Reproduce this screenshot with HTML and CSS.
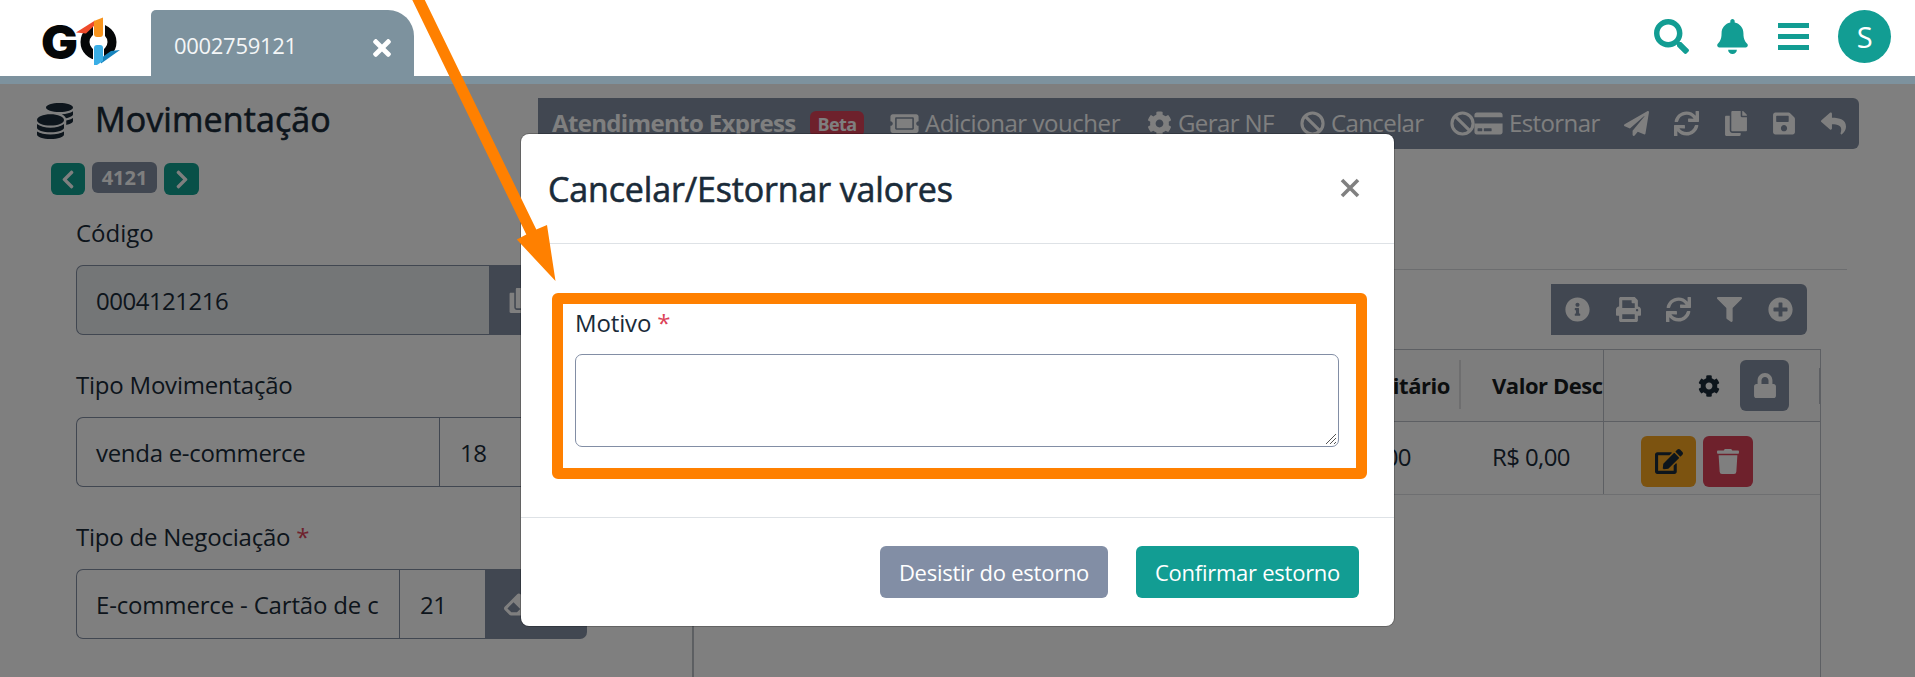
FILE: index.html
```html
<!DOCTYPE html>
<html lang="pt-BR">
<head>
<meta charset="utf-8">
<title>Movimentação</title>
<link rel="stylesheet" href="styles.css">
</head>
<body>
<svg class="sprite" aria-hidden="true">
  <symbol id="times" viewBox="0 0 352 512"><path d="M242.72 256l100.07-100.07c12.28-12.28 12.28-32.19 0-44.48l-22.24-22.24c-12.28-12.28-32.19-12.28-44.48 0L176 189.28 75.93 89.21c-12.28-12.28-32.19-12.28-44.48 0L9.21 111.45c-12.28 12.28-12.28 32.19 0 44.48L109.28 256 9.21 356.07c-12.28 12.28-12.28 32.19 0 44.48l22.24 22.24c12.28 12.28 32.2 12.28 44.48 0L176 322.72l100.07 100.07c12.28 12.28 32.2 12.28 44.48 0l22.24-22.24c12.28-12.28 12.28-32.19 0-44.48L242.72 256z"/></symbol>
  <symbol id="search" viewBox="0 0 512 512"><path d="M505 442.7L405.3 343c-4.5-4.5-10.6-7-17-7H372c27.6-35.3 44-79.7 44-128C416 93.1 322.9 0 208 0S0 93.1 0 208s93.1 208 208 208c48.3 0 92.7-16.4 128-44v16.3c0 6.4 2.5 12.5 7 17l99.7 99.7c9.4 9.4 24.6 9.4 33.9 0l28.3-28.3c9.4-9.4 9.4-24.6.1-34zM208 336c-70.7 0-128-57.2-128-128 0-70.7 57.2-128 128-128 70.7 0 128 57.2 128 128 0 70.7-57.2 128-128 128z"/></symbol>
  <symbol id="bell" viewBox="0 0 448 512"><path d="M224 512c35.32 0 63.97-28.65 63.97-64H160.03c0 35.35 28.65 64 63.97 64zm215.39-149.71c-19.32-20.76-55.47-51.99-55.47-154.29 0-77.7-54.48-139.9-127.94-155.16V32c0-17.67-14.32-32-31.98-32s-31.98 14.33-31.98 32v20.84C118.56 68.1 64.08 130.3 64.08 208c0 102.3-36.15 133.53-55.47 154.29-6 6.45-8.66 14.16-8.61 21.71.11 16.4 12.98 32 32.1 32h383.8c19.12 0 32-15.6 32.1-32 .05-7.55-2.61-15.27-8.61-21.71z"/></symbol>
  <symbol id="bars" viewBox="0 0 31 27"><path d="M0 0h31v5H0zM0 11h31v5H0zM0 22h31v5H0z"/></symbol>
  <symbol id="cog" viewBox="0 0 512 512"><path d="M487.4 315.7l-42.6-24.6c4.3-23.2 4.3-47 0-70.2l42.6-24.6c4.9-2.8 7.1-8.6 5.5-14-11.1-35.6-30-67.8-54.7-94.6-3.8-4.1-10-5.1-14.8-2.3L380.8 110c-17.9-15.4-38.5-27.3-60.8-35.1V25.8c0-5.6-3.9-10.5-9.4-11.7-36.7-8.2-74.3-7.8-109.2 0-5.5 1.2-9.4 6.1-9.4 11.7V75c-22.2 7.9-42.8 19.8-60.8 35.1L88.7 85.5c-4.9-2.8-11-1.9-14.8 2.3-24.7 26.7-43.6 58.9-54.7 94.6-1.7 5.4.6 11.2 5.5 14L67.3 221c-4.3 23.2-4.3 47 0 70.2l-42.6 24.6c-4.9 2.8-7.1 8.6-5.5 14 11.1 35.6 30 67.8 54.7 94.6 3.8 4.1 10 5.1 14.8 2.3l42.6-24.6c17.9 15.4 38.5 27.3 60.8 35.1v49.2c0 5.6 3.9 10.5 9.4 11.7 36.7 8.2 74.3 7.8 109.2 0 5.5-1.2 9.4-6.1 9.4-11.7v-49.2c22.2-7.9 42.8-19.8 60.8-35.1l42.6 24.6c4.9 2.8 11 1.9 14.8-2.3 24.7-26.7 43.6-58.9 54.7-94.6 1.5-5.5-.7-11.3-5.6-14.1zM256 336c-44.1 0-80-35.9-80-80s35.9-80 80-80 80 35.9 80 80-35.9 80-80 80z"/></symbol>
  <symbol id="ban" viewBox="0 0 512 512"><g fill="none" stroke="currentColor" stroke-width="64"><circle cx="256" cy="256" r="216"/><path d="M108 108l296 296"/></g></symbol>
  <symbol id="plane" viewBox="0 0 512 512"><path d="M476 3.2L12.5 270.6c-18.1 10.4-15.8 35.6 2.2 43.2L121 358.4l287.3-253.2c5.5-4.9 13.3 2.6 8.6 8.3L176 407v80.5c0 23.6 28.5 32.9 42.5 15.8L282 426l124.6 52.2c14.2 6 30.4-2.9 33-18.2l72-432C515 7.8 493.3-6.8 476 3.2z"/></symbol>
  <symbol id="copy" viewBox="0 0 448 512"><path d="M320 448v40c0 13.255-10.745 24-24 24H24c-13.255 0-24-10.745-24-24V120c0-13.255 10.745-24 24-24h72v296c0 30.879 25.121 56 56 56h168zm0-344V0H152c-13.255 0-24 10.745-24 24v368c0 13.255 10.745 24 24 24h272c13.255 0 24-10.745 24-24V128H344c-13.2 0-24-10.8-24-24zm120.971-31.029L375.029 7.029A24 24 0 0 0 358.059 0H352v96h96v-6.059a24 24 0 0 0-7.029-16.97z"/></symbol>
  <symbol id="save" viewBox="0 0 448 512"><path d="M433.941 129.941l-83.882-83.882A48 48 0 0 0 316.118 32H48C21.49 32 0 53.49 0 80v352c0 26.51 21.49 48 48 48h352c26.51 0 48-21.49 48-48V163.882a48 48 0 0 0-14.059-33.941zM224 416c-35.346 0-64-28.654-64-64 0-35.346 28.654-64 64-64s64 28.654 64 64c0 35.346-28.654 64-64 64zm96-304.52V212c0 6.627-5.373 12-12 12H76c-6.627 0-12-5.373-12-12V108c0-6.627 5.373-12 12-12h228.52c3.183 0 6.235 1.264 8.485 3.515l3.48 3.48A11.996 11.996 0 0 1 320 111.48z"/></symbol>
  <symbol id="reply" viewBox="0 0 512 512"><path d="M8.309 189.836L184.313 37.851C199.719 24.546 224 35.347 224 56.015v80.053c160.629 1.839 288 34.032 288 186.258 0 61.441-39.581 122.309-83.333 154.132-13.653 9.931-33.111-2.533-28.077-18.631 45.344-145.012-21.507-183.51-176.59-185.742V360c0 20.7-24.3 31.453-39.687 18.164l-176.004-152c-11.071-9.562-11.086-26.753 0-36.328z"/></symbol>
  <symbol id="sync" viewBox="0 0 512 512"><path d="M440.65 12.57l4 82.77A247.16 247.16 0 0 0 255.83 8C134.73 8 33.91 94.92 12.29 209.82A12 12 0 0 0 24.09 224h49.05a12 12 0 0 0 11.67-9.26 175.91 175.91 0 0 1 317-56.94l-101.46-4.86a12 12 0 0 0-12.57 12v47.41a12 12 0 0 0 12 12H500a12 12 0 0 0 12-12V12a12 12 0 0 0-12-12h-47.37a12 12 0 0 0-11.98 12.57zM255.83 432a175.61 175.61 0 0 1-146-77.8l101.8 4.87a12 12 0 0 0 12.57-12v-47.4a12 12 0 0 0-12-12H12a12 12 0 0 0-12 12V500a12 12 0 0 0 12 12h47.35a12 12 0 0 0 12-12.6l-4.15-82.57A247.17 247.17 0 0 0 255.83 504c121.11 0 221.93-86.92 243.55-201.82a12 12 0 0 0-11.8-14.18h-49.05a12 12 0 0 0-11.67 9.26A175.86 175.86 0 0 1 255.83 432z"/></symbol>
  <symbol id="info" viewBox="0 0 512 512"><path d="M256 8C119.043 8 8 119.083 8 256c0 136.997 111.043 248 248 248s248-111.003 248-248C504 119.083 392.957 8 256 8zm0 110c23.196 0 42 18.804 42 42s-18.804 42-42 42-42-18.804-42-42 18.804-42 42-42zm56 254c0 6.627-5.373 12-12 12h-88c-6.627 0-12-5.373-12-12v-24c0-6.627 5.373-12 12-12h12v-64h-12c-6.627 0-12-5.373-12-12v-24c0-6.627 5.373-12 12-12h64c6.627 0 12 5.373 12 12v100h12c6.627 0 12 5.373 12 12v24z"/></symbol>
  <symbol id="print" viewBox="0 0 512 512"><path d="M448 192V77.25c0-8.49-3.37-16.62-9.37-22.63L393.37 9.37c-6-6-14.14-9.37-22.63-9.37H96C78.33 0 64 14.33 64 32v160c-35.35 0-64 28.65-64 64v112c0 8.84 7.16 16 16 16h48v96c0 17.67 14.33 32 32 32h320c17.67 0 32-14.33 32-32v-96h48c8.84 0 16-7.16 16-16V256c0-35.35-28.65-64-64-64zm-64 256H128v-96h256v96zm0-224H128V64h192v48c0 8.84 7.16 16 16 16h48v96zm48 72c-13.25 0-24-10.75-24-24 0-13.26 10.75-24 24-24s24 10.74 24 24c0 13.25-10.75 24-24 24z"/></symbol>
  <symbol id="filter" viewBox="0 0 512 512"><path d="M487.976 0H24.028C2.71 0-8.047 25.866 7.058 40.971L192 225.941V432c0 7.831 3.821 15.17 10.237 19.662l80 55.98C298.02 518.69 320 507.493 320 487.98V225.941l184.947-184.97C520.021 25.896 509.338 0 487.976 0z"/></symbol>
  <symbol id="plus" viewBox="0 0 512 512"><path d="M256 8C119 8 8 119 8 256s111 248 248 248 248-111 248-248S393 8 256 8zm144 276c0 6.6-5.4 12-12 12h-92v92c0 6.6-5.4 12-12 12h-56c-6.6 0-12-5.4-12-12v-92h-92c-6.6 0-12-5.4-12-12v-56c0-6.6 5.4-12 12-12h92v-92c0-6.6 5.4-12 12-12h56c6.6 0 12 5.4 12 12v92h92c6.6 0 12 5.4 12 12v56z"/></symbol>
  <symbol id="lock" viewBox="0 0 448 512"><path d="M400 224h-24v-72C376 68.2 307.8 0 224 0S72 68.2 72 152v72H48c-26.5 0-48 21.5-48 48v192c0 26.5 21.5 48 48 48h352c26.5 0 48-21.5 48-48V272c0-26.5-21.5-48-48-48zm-104 0H152v-72c0-39.7 32.3-72 72-72s72 32.3 72 72v72z"/></symbol>
  <symbol id="edit" viewBox="0 0 576 512"><path d="M402.6 83.2l90.2 90.2c3.8 3.8 3.8 10 0 13.8L274.4 405.6l-92.8 10.3c-12.4 1.4-22.9-9.1-21.5-21.5l10.3-92.8L388.8 83.2c3.8-3.8 10-3.8 13.8 0zm162-22.9l-48.8-48.8c-15.2-15.2-39.9-15.2-55.2 0l-35.4 35.4c-3.8 3.8-3.8 10 0 13.8l90.2 90.2c3.8 3.8 10 3.8 13.8 0l35.4-35.4c15.2-15.3 15.2-40 0-55.2zM384 346.2V448H64V128h229.8c3.2 0 6.2-1.3 8.5-3.5l40-40c7.6-7.6 2.2-20.5-8.5-20.5H48C21.5 64 0 85.5 0 112v352c0 26.5 21.5 48 48 48h352c26.5 0 48-21.5 48-48V306.2c0-10.7-12.9-16-20.5-8.5l-40 40c-2.2 2.3-3.5 5.3-3.5 8.5z"/></symbol>
  <symbol id="trash" viewBox="0 0 448 512"><path d="M432 32H312l-9.4-18.7A24 24 0 0 0 281.1 0H166.8a23.72 23.72 0 0 0-21.4 13.3L136 32H16A16 16 0 0 0 0 48v32a16 16 0 0 0 16 16h416a16 16 0 0 0 16-16V48a16 16 0 0 0-16-16zM32 128l21.2 339a48 48 0 0 0 47.9 45h245.8a48 48 0 0 0 47.9-45L416 128z"/></symbol>
  <symbol id="ticket" viewBox="0 0 576 512"><path d="M128 160h320v192H128V160zm400 96c0 26.51 21.49 48 48 48v96c0 26.51-21.49 48-48 48H48c-26.51 0-48-21.49-48-48v-96c26.51 0 48-21.49 48-48s-21.49-48-48-48v-96c0-26.51 21.49-48 48-48h480c26.51 0 48 21.49 48 48v96c-26.51 0-48 21.49-48 48zm-48-104c0-13.255-10.745-24-24-24H120c-13.255 0-24 10.745-24 24v208c0 13.255 10.745 24 24 24h336c13.255 0 24-10.745 24-24V152z"/></symbol>
  <symbol id="card" viewBox="0 0 576 512"><path d="M0 432c0 26.5 21.5 48 48 48h480c26.5 0 48-21.5 48-48V256H0v176zm192-68c0-6.6 5.4-12 12-12h136c6.6 0 12 5.4 12 12v40c0 6.6-5.4 12-12 12H204c-6.6 0-12-5.4-12-12v-40zm-128 0c0-6.6 5.4-12 12-12h72c6.6 0 12 5.4 12 12v40c0 6.6-5.4 12-12 12H76c-6.6 0-12-5.4-12-12v-40zM576 80v48H0V80c0-26.5 21.5-48 48-48h480c26.5 0 48 21.5 48 48z"/></symbol>
  <symbol id="coins" viewBox="0 0 512 512"><path d="M0 405.3V448c0 35.3 86 64 192 64s192-28.7 192-64v-42.7C342.7 434.4 267.2 448 192 448S41.3 434.4 0 405.3zM320 128c106 0 192-28.7 192-64S426 0 320 0 128 28.7 128 64s86 64 192 64zM0 300.4V352c0 35.3 86 64 192 64s192-28.7 192-64v-51.6c-41.3 34-116.9 51.6-192 51.6S41.3 334.4 0 300.4zm416 11c57.3-11.1 96-31.7 96-55.4v-42.7c-23.2 16.4-57.3 27.6-96 34.5v63.6zM192 160C86 160 0 195.8 0 240s86 80 192 80 192-35.8 192-80-86-80-192-80zm219.3 56.3c60-10.8 100.7-32 100.7-56.3v-42.7c-35.5 25.1-96.5 38.6-160.7 41.8 29.5 14.3 51.2 33.5 60 57.2z"/></symbol>
  <symbol id="eraser" viewBox="0 0 512 512"><path d="M497.941 273.941c18.745-18.745 18.745-49.137 0-67.882l-160-160c-18.745-18.745-49.136-18.746-67.883 0l-256 256c-18.745 18.745-18.745 49.137 0 67.882l96 96A48.004 48.004 0 0 0 144 480h356c6.627 0 12-5.373 12-12v-40c0-6.627-5.373-12-12-12H355.883l142.058-142.059zm-302.627-62.627l137.373 137.373L265.373 416H150.628l-80-80 124.686-124.686z"/></symbol>
  <symbol id="chevron" viewBox="0 0 320 512"><path d="M34.52 239.03L228.87 44.69c9.37-9.37 24.57-9.37 33.94 0l22.67 22.67c9.36 9.36 9.37 24.52.04 33.9L131.49 256l154.02 154.75c9.34 9.38 9.32 24.54-.04 33.9l-22.67 22.67c-9.37 9.37-24.57 9.37-33.94 0L34.52 272.97c-9.37-9.37-9.37-24.57 0-33.94z"/></symbol>
</svg>

<header class="topbar">
  <svg class="logo" viewBox="0 0 90 56" role="img" aria-label="GO">
    <text class="logo-g" x="5" y="46.500" textLength="37" lengthAdjust="spacingAndGlyphs">G</text>
    <circle cx="62.500" cy="30" r="13.500" fill="none" stroke="#050708" stroke-width="9"/>
    <path d="M57 10h12v17H57zM57 33h11v21H57z" fill="#fff"/>
    <path d="M40 20.500L59 8.500V13l-9 8.500z" fill="#ef4b2b"/>
    <path d="M58 9l9-3.500v16.500q0 3-3 3h-3q-3 0-3-3z" fill="#f7941e"/>
    <path d="M84 38l-19 13.500V46l10-7z" fill="#1683bd"/>
    <path d="M58 36q0-3 3-3h3q3 0 3 3v13l-6 4h-3z" fill="#3aaee6"/>
  </svg>
  <div class="tab"><span>0002759121</span><svg class="tab-close"><use href="#times"/></svg></div>
  <nav class="top-actions">
    <svg class="ic-search"><use href="#search"/></svg>
    <svg class="ic-bell"><use href="#bell"/></svg>
    <svg class="ic-bars"><use href="#bars"/></svg>
    <div class="avatar">S</div>
  </nav>
</header>

<main class="page">
  <section class="page-head">
    <div class="heading">
      <h1><svg class="ic-coins"><use href="#coins"/></svg><span>Movimentação</span></h1>
      <div class="pager">
        <button class="step"><svg><use href="#chevron"/></svg></button>
        <span class="step-no">4121</span>
        <button class="step next"><svg><use href="#chevron"/></svg></button>
      </div>
    </div>
    <div class="toolbar">
      <div class="express"><b>Atendimento Express</b><span class="beta">Beta</span></div>
      <div><svg class="wide"><use href="#ticket"/></svg><span class="voucher">Adicionar voucher</span></div>
      <div><svg><use href="#cog"/></svg><span>Gerar NF</span></div>
      <div><svg><use href="#ban"/></svg><span>Cancelar</span></div>
      <div class="refund"><svg><use href="#ban"/></svg><svg class="wide"><use href="#card"/></svg><span>Estornar</span></div>
      <div><svg><use href="#plane"/></svg></div>
      <div><svg><use href="#sync"/></svg></div>
      <div><svg class="slim"><use href="#copy"/></svg></div>
      <div><svg class="slim"><use href="#save"/></svg></div>
      <div><svg><use href="#reply"/></svg></div>
    </div>
  </section>

  <div class="columns">
    <aside class="form">
      <label class="short">Código</label>
      <div class="group"><div class="field ro digits">0004121216</div><div class="addon"><svg class="slim"><use href="#copy"/></svg></div></div>
      <label>Tipo Movimentação</label>
      <div class="group"><div class="field main2">venda e-commerce</div><div class="field code digits">18</div></div>
      <label>Tipo de Negociação <i>*</i></label>
      <div class="group"><div class="field main3">E-commerce - Cartão de c</div><div class="field num digits">21</div><div class="addon last"><svg><use href="#eraser"/></svg></div></div>
    </aside>
    <section class="items">
      <div class="rule"></div>
      <div class="mini-bar">
        <svg><use href="#info"/></svg><svg><use href="#print"/></svg><svg><use href="#sync"/></svg><svg><use href="#filter"/></svg><svg><use href="#plus"/></svg>
      </div>
      <div class="table">
        <div class="row head">
          <div class="cell unit">Valor Unitário</div>
          <div class="cell disc">Valor Desc</div>
          <div class="cell acts"><svg class="gear"><use href="#cog"/></svg><div class="sq lock"><svg class="slim"><use href="#lock"/></svg></div><div class="tick"></div></div>
        </div>
        <div class="row">
          <div class="cell unit">R$ 0,00</div>
          <div class="cell disc">R$ 0,00</div>
          <div class="cell acts"><div class="sq edit"><svg class="wide"><use href="#edit"/></svg></div><div class="sq trash"><svg class="slim"><use href="#trash"/></svg></div></div>
        </div>
      </div>
    </section>
  </div>
</main>

<div class="backdrop"></div>
<div class="modal" role="dialog">
  <div class="modal-head"><h2>Cancelar/Estornar valores</h2><svg class="modal-close" viewBox="0 0 20 20"><path d="M2 2l16 16M18 2L2 18"/></svg></div>
  <div class="modal-body">
    <div class="highlight">
      <label>Motivo <i>*</i></label>
      <div class="area"><svg viewBox="0 0 12 12"><path d="M1 11L11 1M5 11l6-6M9 11l2-2"/></svg></div>
    </div>
  </div>
  <div class="modal-foot"><button class="btn gray">Desistir do estorno</button><button class="btn teal">Confirmar estorno</button></div>
</div>
<svg class="arrow" viewBox="0 0 600 300"><path d="M412.300 0H424.800L536.300 229.600L547 225L555.500 281L516.800 239.600L526.300 234.500z"/></svg>
</body>
</html>
```
FILE: styles.css
```css
* { box-sizing: border-box; }
html, body { margin: 0; height: 677px; overflow: hidden; }
body {
  font: 400 24px/36px "Open Sans", "Noto Sans", sans-serif;
  letter-spacing: -0.6px;
  color: #1a2b39;
  background: #fff;
}
svg { display: block; flex: none; fill: currentColor; }
i { font-style: normal; color: #dc4259; }
button { border: 0; padding: 0; font: inherit; letter-spacing: inherit; color: #fff; }
.sprite { position: absolute; width: 0; height: 0; }

/* top bar */
.topbar {
  position: relative; z-index: 2;
  display: flex; align-items: flex-end;
  height: 84px; border-bottom: 8px solid #7d929e; background: #fff;
}
.logo { width: 90px; height: 56px; margin: 0 25px 8px 36px; }
.logo-g { font: 900 47px "Inter", sans-serif; letter-spacing: 0; fill: #050708; }
.tab {
  display: flex; justify-content: space-between; align-items: center;
  width: 263px; height: 66px; padding: 0 23px 0 23px;
  border-radius: 5px 26px 0 0; background: #7d929e; color: #f4f6f7;
}
.tab span { font-size: 22px; letter-spacing: -0.3px; line-height: 36px; padding-top: 4px; }
.tab-close { width: 18px; height: 26px; margin-top: 10px; color: #fff; }
.top-actions { display: flex; align-items: center; height: 76px; margin-left: auto; padding: 0 24px 3px 0; color: #129d93; }
.ic-search { width: 35px; height: 35px; margin-right: 28px; }
.ic-bell { width: 31px; height: 35px; margin-right: 30px; }
.ic-bars { width: 31px; height: 27px; margin-right: 29px; }
.avatar { width: 53px; height: 53px; border-radius: 50%; background: #129d93; color: #fff; font-size: 29px; line-height: 54px; text-align: center; }

/* page head */
.page-head { display: flex; height: 130px; padding-top: 14px; }
.heading { width: 538px; padding-left: 37px; }
h1 { display: flex; align-items: center; gap: 22px; margin: 0; height: 46px; font-size: 34px; font-weight: 500; letter-spacing: 0.1px; line-height: 46px; -webkit-text-stroke: 0.6px; }
.ic-coins { width: 36px; height: 36px; }
h1 span { padding-bottom: 4px; }
.pager { display: flex; gap: 7px; padding: 18px 0 0 14px; }
.step { display: grid; place-items: center; width: 34px; height: 32px; margin-top: 1px; border-radius: 6px; background: #10a090; }
.step svg { width: 14px; height: 21px; }
.next { width: 35px; }
.next svg { transform: scaleX(-1); }
.step-no { width: 65px; height: 31px; border-radius: 6px; background: #828ea2; color: #fff; font-weight: 700; font-size: 20px; letter-spacing: 0; line-height: 32px; text-align: center; }
.toolbar {
  display: grid; grid-template-columns: 338px 257px 153px 150px 174px 50px 51px 48px 48px 38px;
  width: 1321px; height: 51px; padding-left: 14px;
  border-radius: 0 6px 6px 0; background: #828ea2; color: #fff;
}
.toolbar > div { display: flex; align-items: center; gap: 6px; white-space: nowrap; }
.toolbar svg { width: 25px; height: 25px; }
.toolbar svg.wide { width: 29px; }
svg.slim, .toolbar svg.slim { width: 22px; height: 25px; }
.toolbar span, .toolbar b { padding-bottom: 1px; }
.toolbar .voucher { letter-spacing: -0.45px; }
.refund svg + svg { margin-left: -7px; }
.toolbar .express { gap: 8px; }
.express b { letter-spacing: -0.65px; width: 250px; }
.toolbar .beta { width: 54px; height: 26px; padding: 0; border-radius: 6px; background: #dc4259; font-size: 18px; font-weight: 700; line-height: 27px; text-align: center; }

/* columns */
.columns { display: flex; height: 463px; }
.form { width: 692px; padding: 0 105px 0 76px; flex: none; }
.form label { display: block; height: 36px; margin-top: 1px; line-height: 36px; letter-spacing: -0.22px; }
.form .short { letter-spacing: 0; }
.group { display: flex; height: 70px; margin: 14px 0 32px; }
.field { height: 70px; padding: 0 19px; border: 1px solid #828ea2; border-right: 0; line-height: 70px; letter-spacing: -0.3px; white-space: nowrap; overflow: hidden; }
.field:first-child { border-radius: 7px 0 0 7px; }
.field.digits { letter-spacing: -0.5px; }
.ro { width: 413px; background: #e9ecef; }
.main2 { width: 363px; }
.code { width: 148px; padding-left: 20px; }
.main3 { width: 323px; letter-spacing: -0.17px; }
.num { width: 86px; padding-left: 20px; }
.addon { display: flex; align-items: center; width: 98px; padding-left: 19px; background: #828ea2; color: #fff; }
.addon.last { width: 102px; border-radius: 0 7px 7px 0; }
.addon svg { width: 25px; height: 25px; }

.items { width: 1155px; height: 463px; border-left: 1px solid #b9bec3; }
.rule { height: 1px; margin-top: 55px; background: #d9dbde; }
.mini-bar {
  display: flex; align-items: center; gap: 25.700px;
  width: 256px; height: 51px; margin: 14px 0 14px 858px; padding-left: 14px;
  border-radius: 0 6px 6px 0; background: #828ea2; color: #fff;
}
.mini-bar svg { width: 25px; height: 25px; }
.table { width: 1128px; height: 328px; border: 1px solid #babfc7; border-bottom: 0; }
.row { display: flex; height: 73px; border-bottom: 1px solid #dddfe2; }
.row.head { height: 72px; border-color: #babfc7; background: #fafafa; font-size: 22px; font-weight: 700; color: #181d1f; letter-spacing: -0.45px; }
.cell { display: flex; align-items: center; white-space: nowrap; overflow: hidden; padding-bottom: 2px; }
.unit { width: 767px; justify-content: flex-end; padding-right: 50px; }
.head .unit { padding-right: 0; }
.head .unit::after { content: ""; width: 2px; height: 49px; margin-left: 9px; background: #dddddf; }
.disc { width: 143px; padding-left: 31px; border-right: 1px solid #babfc7; }
.acts { flex: 1; padding: 0 0 0 37px; gap: 7px; }
.head .acts { padding-left: 94px; gap: 0; }
.gear { width: 22px; height: 22px; margin-right: 20px; color: #1a2b39; }
.sq { display: grid; place-items: center; height: 51px; border-radius: 6px; color: #fff; }
.lock { width: 49px; background: #828ea2; }
.edit { width: 55px; background: #f8a620; color: #1a2b39; }
.edit svg { width: 28px; height: 25px; }
.trash { width: 50px; background: #dc4259; }
.row:not(.head) .sq { margin-top: 7px; }
.tick { width: 1px; height: 36px; margin-left: 30px; background: #babfc7; }

/* dialog */
.backdrop { position: absolute; inset: 84px 0 0; background: rgba(0, 0, 0, .5); }
.modal { position: absolute; z-index: 3; left: 521px; top: 134px; width: 873px; height: 492px; border-radius: 8px; background: #fff; box-shadow: 0 0 0 1px rgba(0, 0, 0, .22); }
.modal-head { display: flex; justify-content: space-between; height: 110px; padding: 32px 34px 0 27px; border-bottom: 1px solid #dee2e6; }
h2 { margin: 0; font-size: 34px; font-weight: 500; letter-spacing: -0.15px; line-height: 46px; -webkit-text-stroke: 0.6px; }
.modal-close { width: 20px; height: 20px; margin-top: 12px; fill: none; stroke: #808080; stroke-width: 3.600; }
.modal-body { height: 273px; padding: 49px 27px 0 31px; }
.highlight { height: 186px; padding: 11px 17px 0 12px; border: 11px solid #ff8000; border-radius: 6px; background: #fff; background-clip: padding-box; }
.highlight label { display: block; line-height: 36px; margin-top: -10px; letter-spacing: -0.15px; }
.area { display: flex; justify-content: flex-end; align-items: flex-end; height: 93px; margin-top: 13px; border: 1px solid #828ea5; border-radius: 7px; }
.area svg { width: 12px; height: 12px; margin: 0 1px 1px; fill: none; stroke: #555; stroke-width: 1; }
.modal-foot { display: flex; justify-content: flex-end; gap: 28px; height: 109px; padding: 28px 35px 0 0; border-top: 1px solid #dee2e6; }
.btn { height: 52px; border-radius: 6px; font-size: 22px; letter-spacing: -0.25px; padding-bottom: 1px; }
.gray { width: 228px; background: #828ea5; }
.teal { width: 223px; background: #129d93; }
.arrow { position: absolute; z-index: 4; left: 0; top: 0; width: 600px; height: 300px; fill: #ff8000; }
```
